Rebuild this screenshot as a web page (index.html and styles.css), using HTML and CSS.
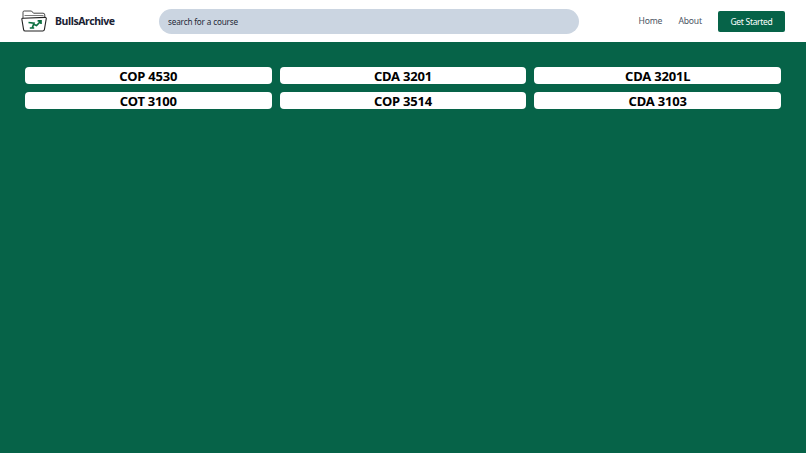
FILE: index.html
```html
<!DOCTYPE html>
<html lang="en">
<head>
<meta charset="utf-8">
<title>BullsArchive</title>
<link rel="stylesheet" href="styles.css">
</head>
<body>
<header class="nav">
  <div class="brand">
    <svg class="logo" width="26" height="22" viewBox="0 0 26 22" fill="none">
      <path d="M2 11V2.2Q2 1 3.2 1H10.5L12.5 3.2H22Q23.8 3.2 23.8 5V9" stroke="#333" stroke-width="0.9"/>
      <path d="M3.5 5.5H22.5" stroke="#444" stroke-width="0.7"/>
      <path d="M.9 9.5Q.7 8 2.2 8.2L23.8 7.4Q25.6 7.3 25.2 9L23.4 19.6Q23.1 21 21.7 21H4.2Q2.8 21 2.6 19.6Z" fill="#fff" stroke="#222" stroke-width="1.1"/>
      <path d="M7.5 12.5L13 13.2L11.2 18M8.8 18H13.2M13 14.5L15.5 15.5L19.5 11.5M16.6 10.8H20V14" stroke="#0b6e3f" stroke-width="1.7"/>
    </svg>
    <span class="brand-name">BullsArchive</span>
  </div>
  <input class="search" type="text" placeholder="search for a course">
  <nav class="links">
    <a class="link" href="#">Home</a>
    <a class="link" href="#">About</a>
    <button class="cta">Get Started</button>
  </nav>
</header>
<main class="courses">
  <div class="course">COP 4530</div>
  <div class="course">CDA 3201</div>
  <div class="course">CDA 3201L</div>
  <div class="course">COT 3100</div>
  <div class="course">COP 3514</div>
  <div class="course">CDA 3103</div>
</main>
</body>
</html>
```
FILE: styles.css
```css
* { box-sizing: border-box; }
html, body { height: 100%; }
body {
  margin: 0;
  background: #066348;
  font-family: "Noto Sans", "Open Sans", sans-serif;
  overflow: hidden;
}
.nav {
  height: 42px;
  background: #fff;
  display: flex;
  align-items: center;
  padding: 0 21px;
}
.brand { display: flex; align-items: center; width: 138px; flex: none; }
.logo { flex: none; }
.brand-name {
  margin-left: 8px;
  font-size: 10.5px;
  font-weight: 700;
  letter-spacing: -0.42px;
  color: #1a2233;
}
.search {
  flex: none;
  width: 420px;
  height: 25px;
  border: 0;
  border-radius: 13px;
  background: #cbd5e1;
  padding: 0 9px;
  font: 8.2px "Noto Sans", sans-serif;
  letter-spacing: -0.18px;
  color: #1f2937;
  outline: none;
}
.search::placeholder { color: #1f2937; opacity: 1; }
.links { margin-left: auto; display: flex; align-items: center; flex: none; }
.link {
  font-size: 8.6px;
  letter-spacing: -0.2px;
  color: #4b5563;
  text-decoration: none;
  margin-right: 16.2px;
}
.cta {
  flex: none;
  width: 67px;
  height: 21px;
  border: 0;
  border-radius: 2px;
  background: #066348;
  color: #fff;
  font: 8.5px "Noto Sans", sans-serif;
  letter-spacing: -0.3px;
  padding: 0;
}
.courses {
  display: grid;
  grid-template-columns: repeat(3, 1fr);
  gap: 8px;
  padding: 25px 25px 0;
}
.course {
  height: 17px;
  line-height: 18px;
  background: #fff;
  border-radius: 4px;
  text-align: center;
  font-size: 13px;
  font-weight: 700;
  letter-spacing: -0.2px;
  color: #000;
}
```
